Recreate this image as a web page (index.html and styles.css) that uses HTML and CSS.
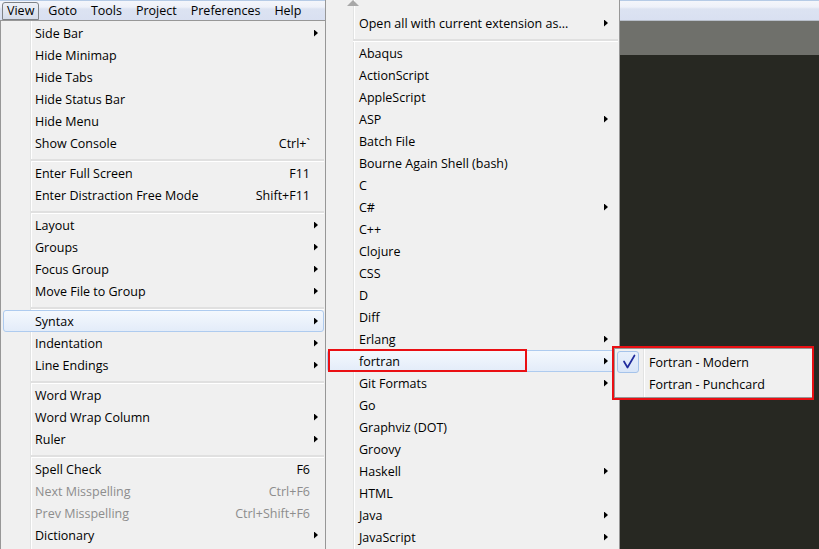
FILE: index.html
```html
<!DOCTYPE html>
<html>
<head>
<meta charset="utf-8">
<title>Menu</title>
<link rel="stylesheet" href="styles.css">
</head>
<body>
<div class="app">
  <div class="menubar">
    <span class="mb-item active">View</span>
    <span class="mb-item">Goto</span>
    <span class="mb-item">Tools</span>
    <span class="mb-item">Project</span>
    <span class="mb-item">Preferences</span>
    <span class="mb-item">Help</span>
  </div>
  <div class="tabbar"></div>
  <div class="editor"></div>
</div>

<div class="menu menu-view">
  <div class="item"><span class="label">Side Bar</span><span class="arrow"></span></div>
  <div class="item"><span class="label">Hide Minimap</span></div>
  <div class="item"><span class="label">Hide Tabs</span></div>
  <div class="item"><span class="label">Hide Status Bar</span></div>
  <div class="item"><span class="label">Hide Menu</span></div>
  <div class="item"><span class="label">Show Console</span><span class="key">Ctrl+`</span></div>
  <div class="sep"></div>
  <div class="item"><span class="label">Enter Full Screen</span><span class="key">F11</span></div>
  <div class="item"><span class="label">Enter Distraction Free Mode</span><span class="key">Shift+F11</span></div>
  <div class="sep"></div>
  <div class="item"><span class="label">Layout</span><span class="arrow"></span></div>
  <div class="item"><span class="label">Groups</span><span class="arrow"></span></div>
  <div class="item"><span class="label">Focus Group</span><span class="arrow"></span></div>
  <div class="item"><span class="label">Move File to Group</span><span class="arrow"></span></div>
  <div class="sep"></div>
  <div class="item hot"><span class="label">Syntax</span><span class="arrow"></span></div>
  <div class="item"><span class="label">Indentation</span><span class="arrow"></span></div>
  <div class="item"><span class="label">Line Endings</span><span class="arrow"></span></div>
  <div class="sep"></div>
  <div class="item"><span class="label">Word Wrap</span></div>
  <div class="item"><span class="label">Word Wrap Column</span><span class="arrow"></span></div>
  <div class="item"><span class="label">Ruler</span><span class="arrow"></span></div>
  <div class="sep"></div>
  <div class="item"><span class="label">Spell Check</span><span class="key">F6</span></div>
  <div class="item disabled"><span class="label">Next Misspelling</span><span class="key">Ctrl+F6</span></div>
  <div class="item disabled"><span class="label">Prev Misspelling</span><span class="key">Ctrl+Shift+F6</span></div>
  <div class="item"><span class="label">Dictionary</span><span class="arrow"></span></div>
</div>

<div class="menu menu-syntax">
  <div class="scroll-up"><span class="up-tri"></span></div>
  <div class="item"><span class="label">Open all with current extension as...</span><span class="arrow"></span></div>
  <div class="sep"></div>
  <div class="item"><span class="label">Abaqus</span></div>
  <div class="item"><span class="label">ActionScript</span></div>
  <div class="item"><span class="label">AppleScript</span></div>
  <div class="item"><span class="label">ASP</span><span class="arrow"></span></div>
  <div class="item"><span class="label">Batch File</span></div>
  <div class="item"><span class="label">Bourne Again Shell (bash)</span></div>
  <div class="item"><span class="label">C</span></div>
  <div class="item"><span class="label">C#</span><span class="arrow"></span></div>
  <div class="item"><span class="label">C++</span></div>
  <div class="item"><span class="label">Clojure</span></div>
  <div class="item"><span class="label">CSS</span></div>
  <div class="item"><span class="label">D</span></div>
  <div class="item"><span class="label">Diff</span></div>
  <div class="item"><span class="label">Erlang</span><span class="arrow"></span></div>
  <div class="item hot"><span class="label">fortran</span><span class="arrow"></span></div>
  <div class="item"><span class="label">Git Formats</span><span class="arrow"></span></div>
  <div class="item"><span class="label">Go</span></div>
  <div class="item"><span class="label">Graphviz (DOT)</span></div>
  <div class="item"><span class="label">Groovy</span></div>
  <div class="item"><span class="label">Haskell</span><span class="arrow"></span></div>
  <div class="item"><span class="label">HTML</span></div>
  <div class="item"><span class="label">Java</span><span class="arrow"></span></div>
  <div class="item"><span class="label">JavaScript</span><span class="arrow"></span></div>
</div>

<div class="menu menu-fortran">
  <div class="item checked">
    <span class="checkbox"><svg width="22" height="22" viewBox="0 0 22 22"><polyline points="7,10.5 10.5,16.5 17.5,4.5" fill="none" stroke="#1f2b9c" stroke-width="1.7" stroke-linejoin="round" stroke-linecap="round"/></svg></span>
    <span class="label">Fortran - Modern</span>
  </div>
  <div class="item"><span class="label">Fortran - Punchcard</span></div>
</div>

<div class="mark mark-item"></div>
<div class="mark mark-menu"></div>
</body>
</html>
```

FILE: styles.css
```css
* {
  box-sizing: border-box;
}

html,
body {
  margin: 0;
  padding: 0;
}

body {
  width: 819px;
  height: 549px;
  overflow: hidden;
  position: relative;
  font-family: "Open Sans", "Noto Sans", "DejaVu Sans", sans-serif;
  font-size: 12.5px;
  color: #000;
  background: #272822;
}

.app {
  display: flex;
  flex-direction: column;
  height: 549px;
}

.menubar {
  height: 21px;
  display: flex;
  align-items: flex-start;
  padding-left: 2px;
  border-bottom: 1px solid #b9c0cb;
  background: linear-gradient(to bottom, #b6cbe6 0, #b6cbe6 1px, #f4f6fb 1px, #eef1f9 7px, #dce3f2 9px, #d9e0f1 100%);
}

.mb-item {
  margin-top: 2px;
  height: 18px;
  line-height: 15px;
  padding: 0 4px;
  margin-right: 4px;
  border: 1px solid transparent;
  border-radius: 3px 3px 0 0;
  white-space: nowrap;
}

.mb-item.active {
  border-color: #7f8388;
  background: linear-gradient(to bottom, #eef1f7, #d5dcea);
}

.tabbar {
  height: 34px;
  background: #6f706b;
}

.editor {
  flex: 1;
  background: #272822;
}

/* menus */
.menu {
  position: absolute;
  display: flex;
  flex-direction: column;
  border: 1px solid #979797;
  background-color: #f0f0f0;
  background-repeat: no-repeat;
}

.menu-view {
  left: 0;
  top: 20px;
  width: 326px;
  height: 540px;
  padding: 1px 1px 1px 2px;
  background-image: linear-gradient(to right, transparent 29px, #e2e3e3 29px, #e2e3e3 30px, #ffffff 30px, #ffffff 31px, transparent 31px);
}

.menu-syntax {
  left: 325px;
  top: -1px;
  width: 295px;
  height: 560px;
  padding: 1px;
  background-image: linear-gradient(to right, transparent 27px, #e2e3e3 27px, #e2e3e3 28px, #ffffff 28px, #ffffff 29px, transparent 29px);
}

.menu-fortran {
  left: 614px;
  top: 348px;
  width: 199px;
  height: 50px;
  padding: 2px;
  background-image: linear-gradient(to right, transparent 28px, #e2e3e3 28px, #e2e3e3 29px, #ffffff 29px, #ffffff 30px, transparent 30px);
}

.item {
  position: relative;
  display: flex;
  align-items: center;
  height: 22px;
  flex: none;
  padding-left: 31px;
  border: 1px solid transparent;
  border-radius: 3px;
  white-space: nowrap;
}

.item .label {
  flex: 1;
}

.item.hot {
  border-color: #aecbef;
  background: linear-gradient(to bottom, #f4f8fd, #e3ecf9);
}

.item.disabled {
  color: #8d8d8d;
}

.key {
  margin-right: 13px;
}

.arrow {
  width: 4px;
  height: 7px;
  background: #000;
  clip-path: polygon(0 0, 100% 50%, 0 100%);
  margin-right: 5px;
}

.menu-syntax .arrow {
  margin-right: 9px;
}

.sep {
  height: 8px;
  flex: none;
  padding-top: 5px;
  margin-left: 28px;
}

.menu-syntax .sep {
  margin-left: 26px;
}

.sep::before {
  content: "";
  display: block;
  height: 2px;
  background: #e0e0e0;
  border-bottom: 1px solid #ffffff;
}

.scroll-up {
  height: 11px;
  flex: none;
  padding-left: 20px;
}

.up-tri {
  display: block;
  width: 12px;
  height: 6px;
  background: #a8a8a8;
  clip-path: polygon(50% 0, 100% 100%, 0 100%);
  margin-top: -1px;
}

.checkbox {
  position: absolute;
  left: -1px;
  top: -1px;
  width: 22px;
  height: 22px;
  border: 1px solid #a5c3ea;
  border-radius: 3px;
  background: linear-gradient(to bottom, #e8f0fb, #d9e6f8);
}

.checkbox svg {
  position: absolute;
  left: -1px;
  top: -1px;
}

/* annotation boxes */
.mark {
  position: absolute;
  border: 2px solid #ea0f13;
}

.mark-item {
  left: 328px;
  top: 349px;
  width: 199px;
  height: 23px;
}

.mark-menu {
  left: 612px;
  top: 346px;
  width: 202px;
  height: 54px;
}
```
